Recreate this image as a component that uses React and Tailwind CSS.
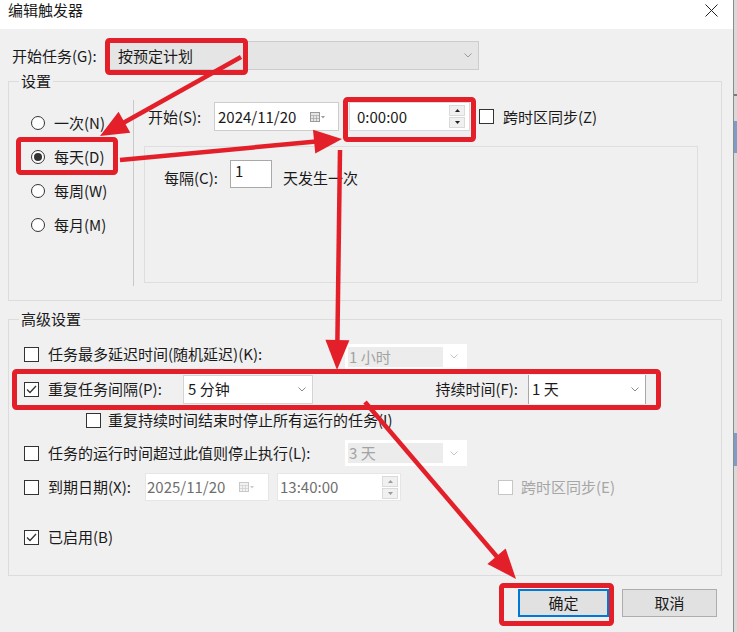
const RED = '#e3202a'

function Chevron({ color = '#8a8a8a' }) {
  return (
    <svg width="8" height="5" viewBox="0 0 8 5" className="shrink-0">
      <path d="M0.5 0.5 L4 4 L7.5 0.5" fill="none" stroke={color} strokeWidth="1" />
    </svg>
  )
}

function CalendarIcon({ muted }) {
  const c = muted ? '#c8c8c8' : '#9a9a9a'
  return (
    <svg width="15" height="10" viewBox="0 0 15 10" className="shrink-0">
      <rect x="0.5" y="0.5" width="9" height="9" fill={muted ? '#f2f2f2' : '#e6e6e6'} stroke={c} />
      <path d="M0.5 3.5 H9.5 M3.5 3.5 V9.5 M6.5 3.5 V9.5 M0.5 6.5 H9.5" stroke={c} strokeWidth="0.6" />
      <path d="M11 4 L15 4 L13 6.5 Z" fill={c} />
    </svg>
  )
}

function Spinner({ muted }) {
  const arrow = muted ? '#9a9a9a' : '#222'
  return (
    <div className="flex flex-col w-[16px] h-[23px] gap-[1px] shrink-0">
      <span className="flex-1 bg-[#f0f0f0] border border-[#dadada] flex items-center justify-center">
        <svg width="5" height="3" viewBox="0 0 5 3"><path d="M0 3 L2.5 0 L5 3 Z" fill={arrow} /></svg>
      </span>
      <span className="flex-1 bg-[#f0f0f0] border border-[#dadada] flex items-center justify-center">
        <svg width="5" height="3" viewBox="0 0 5 3"><path d="M0 0 L2.5 3 L5 0 Z" fill={arrow} /></svg>
      </span>
    </div>
  )
}

function Radio({ checked }) {
  return (
    <span className="w-[14px] h-[14px] rounded-full border border-[#333] bg-white flex items-center justify-center shrink-0">
      {checked && <span className="w-[8px] h-[8px] rounded-full bg-[#333]" />}
    </span>
  )
}

function Checkbox({ checked, disabled }) {
  return (
    <span
      className={
        disabled
          ? 'block w-[15px] h-[15px] shrink-0 border border-[#c6c6c6] bg-white'
          : 'w-[15px] h-[15px] shrink-0 border border-[#333] bg-white flex items-center justify-center'
      }
    >
      {checked && (
        <svg width="11" height="9" viewBox="0 0 11 9">
          <path d="M1 4.5 L4 7.5 L10 1" fill="none" stroke="#333" strokeWidth="1.3" />
        </svg>
      )}
    </span>
  )
}

function DisabledSelect({ value }) {
  return (
    <div className="w-[122px] h-[26px] bg-white p-[3px] flex shrink-0">
      <span className="w-[95px] bg-[#ececec] text-[#a3a3a3] leading-[20px] pl-[1px]">{value}</span>
      <span className="flex-1 flex items-center justify-center">
        <Chevron color="#c6c6c6" />
      </span>
    </div>
  )
}

function Arrow({ x1, y1, x2, y2, head = 28, half = 12, w = 4.5 }) {
  const dx = x2 - x1
  const dy = y2 - y1
  const len = Math.hypot(dx, dy)
  const ux = dx / len
  const uy = dy / len
  const bx = x2 - ux * head
  const by = y2 - uy * head
  const px = -uy * half
  const py = ux * half
  return (
    <g>
      <line x1={x1} y1={y1} x2={bx + ux * 2} y2={by + uy * 2} stroke={RED} strokeWidth={w} />
      <polygon points={`${x2},${y2} ${bx + px},${by + py} ${bx - px},${by - py}`} fill={RED} />
    </g>
  )
}

function Annotations() {
  return (
    <svg className="absolute inset-0 pointer-events-none" width="737" height="632" viewBox="0 0 737 632">
      <g fill="none" stroke={RED} strokeWidth="5">
        <rect x="107.5" y="40.5" width="138" height="32" rx="2" />
        <rect x="18.5" y="139.5" width="97" height="33" rx="2" />
        <rect x="345.5" y="99.5" width="128" height="40" rx="2" />
        <rect x="14.5" y="371.5" width="644" height="36" rx="2" />
        <rect x="501.5" y="585.5" width="110" height="38" rx="2" />
      </g>
      <Arrow x1={241} y1={57} x2={100} y2={136} />
      <Arrow x1={120} y1={160} x2={342} y2={139} />
      <Arrow x1={340} y1={150} x2={337} y2={370} head={30} />
      <Arrow x1={365} y1={402} x2={516} y2={579} head={30} />
    </svg>
  )
}

function SettingsGroup() {
  const radios = [
    { label: '一次(N)' },
    { label: '每天(D)', checked: true },
    { label: '每周(W)' },
    { label: '每月(M)' },
  ]
  return (
    <fieldset className="mt-[1px] h-[230px] border border-[#dcdcdc]">
      <legend className="ml-[10px] px-[2px] leading-[20px]">设置</legend>
      <div className="mt-[9px] h-[186px] flex">
        {/* Schedule type */}
        <div className="w-[124px] pt-[6px] flex flex-col">
          {radios.map((r) => (
            <div key={r.label} className="h-[34px] flex items-center pl-[22px] gap-[9px]">
              <Radio checked={r.checked} />
              <span className="leading-[20px]">{r.label}</span>
            </div>
          ))}
        </div>
        {/* Details */}
        <div className="flex-1 border-l border-[#c9c9c9]">
          <div className="mt-[2px] h-[29px] flex items-center pl-[14px]">
            <span className="w-[66px] shrink-0">开始(S):</span>
            <div className="w-[125px] h-[29px] bg-white border border-[#cdcdcd] flex items-center justify-between pl-[3px] pr-[13px]">
              <span>2024/11/20</span>
              <CalendarIcon />
            </div>
            <div className="ml-[10px] w-[121px] h-[29px] bg-white border border-[#d9d9d9] flex items-center justify-between pl-[7px] pr-[4px]">
              <span>0:00:00</span>
              <Spinner />
            </div>
            <span className="ml-[9px]"><Checkbox /></span>
            <span className="ml-[9px] whitespace-nowrap">跨时区同步(Z)</span>
          </div>
          <div className="mt-[15px] ml-[10px] w-[554px] h-[137px] border border-[#dedede] pt-[13px] pl-[19px] flex items-start">
            <span className="w-[66px] pt-[8px] leading-[20px]">每隔(C):</span>
            <div className="w-[42px] h-[28px] bg-white border border-[#a9a9a9] pl-[4px] leading-[20px]">1</div>
            <span className="ml-[11px] pt-[8px] leading-[20px]">天发生一次</span>
          </div>
        </div>
      </div>
    </fieldset>
  )
}

function AdvancedGroup() {
  return (
    <fieldset className="mt-[8px] h-[267px] border border-[#dcdcdc]">
      <legend className="ml-[10px] px-[2px] leading-[20px]">高级设置</legend>
      <div className="pl-[15px] flex flex-col">
        <div className="mt-[10px] h-[30px] flex items-center">
          <Checkbox />
          <span className="ml-[9px] w-[297px] whitespace-nowrap">任务最多延迟时间(随机延迟)(K):</span>
          <div className="mt-[5px]"><DisabledSelect value="1 小时" /></div>
        </div>
        <div className="mt-[5px] h-[30px] flex items-center">
          <Checkbox checked />
          <span className="ml-[9px] w-[135px] whitespace-nowrap">重复任务间隔(P):</span>
          <div className="w-[130px] h-[29px] bg-white border border-[#d4d4d4] flex items-center justify-between pl-[4px] pr-[6px]">
            <span>5 分钟</span>
            <Chevron />
          </div>
          <div className="w-[215px] h-[29px] flex items-center justify-end pr-[10px] whitespace-nowrap">持续时间(F):</div>
          <div className="w-[118px] h-[29px] bg-white border-x border-[#a8a8a8] flex items-center justify-between pl-[3px] pr-[6px]">
            <span>1 天</span>
            <Chevron />
          </div>
        </div>
        <div className="mt-[1px] h-[30px] flex items-center pl-[62px]">
          <Checkbox />
          <span className="ml-[7px] whitespace-nowrap">重复持续时间结束时停止所有运行的任务(I)</span>
        </div>
        <div className="mt-[3px] h-[30px] flex items-center">
          <Checkbox />
          <span className="ml-[9px] w-[297px] whitespace-nowrap">任务的运行时间超过此值则停止执行(L):</span>
          <DisabledSelect value="3 天" />
        </div>
        <div className="mt-[4px] h-[30px] flex items-center">
          <Checkbox />
          <span className="ml-[9px] w-[97px] whitespace-nowrap">到期日期(X):</span>
          <div className="w-[124px] h-[28px] bg-white border border-[#e6e6e6] flex items-center justify-between pl-[1px] pr-[14px] text-[#6f6f6f]">
            <span>2025/11/20</span>
            <CalendarIcon muted />
          </div>
          <div className="ml-[8px] w-[124px] h-[28px] bg-white border border-[#e6e6e6] flex items-center justify-between pl-[2px] pr-[2px] text-[#6f6f6f]">
            <span>13:40:00</span>
            <Spinner muted />
          </div>
          <span className="ml-[97px]"><Checkbox disabled /></span>
          <span className="ml-[8px] text-[#a6a6a6] whitespace-nowrap">跨时区同步(E)</span>
        </div>
        <div className="mt-[20px] h-[30px] flex items-center">
          <Checkbox checked />
          <span className="ml-[9px]">已启用(B)</span>
        </div>
      </div>
    </fieldset>
  )
}

export default function App() {
  return (
    <div className="relative w-[737px] h-[632px] flex overflow-hidden bg-[#f0f0f0] font-['Noto_Sans_CJK_SC',sans-serif] text-[15px] leading-[20px] text-[#1a1a1a]">
      <div className="w-[733px] flex flex-col">
        {/* Title bar */}
        <div className="h-[29px] bg-white flex justify-between pl-[8px] pr-[15px]">
          <span className="leading-[20px]">编辑触发器</span>
          <svg width="13" height="13" viewBox="0 0 13 13" className="mt-[4px]">
            <path d="M0.5 0.5 L12.5 12.5 M12.5 0.5 L0.5 12.5" stroke="#222" strokeWidth="1" />
          </svg>
        </div>
        {/* Body */}
        <div className="flex-1 bg-[#f0f0f0] pl-[8px] pr-[11px] flex flex-col">
          <div className="mt-[12px] h-[29px] flex items-center pl-[4px]">
            <span className="w-[96px] shrink-0">开始任务(G):</span>
            <div className="w-[371px] h-[29px] bg-[#e5e5e5] border border-[#cccccc] flex items-center justify-between pl-[9px] pr-[6px]">
              <span>按预定计划</span>
              <Chevron color="#9a9a9a" />
            </div>
          </div>
          <SettingsGroup />
          <AdvancedGroup />
          <div className="mt-[13px] flex justify-end gap-[13px] pr-[5px]">
            <button className="w-[91px] h-[28px] bg-[#e1e1e1] border-2 border-[#0078d7]">确定</button>
            <button className="w-[95px] h-[28px] bg-[#e1e1e1] border border-[#adadad]">取消</button>
          </div>
        </div>
      </div>
      {/* Edge of the window behind */}
      <div className="w-[4px] border-l border-[#8c8c8c] bg-[#d9d9d9] flex flex-col">
        <div className="h-[94px]" />
        <div className="h-[2px] bg-[#7a7a7a]" />
        <div className="h-[25px]" />
        <div className="h-[32px] bg-[#7f9dc4]" />
        <div className="h-[280px]" />
        <div className="h-[33px] bg-[#7f9dc4]" />
      </div>
      <Annotations />
    </div>
  )
}
